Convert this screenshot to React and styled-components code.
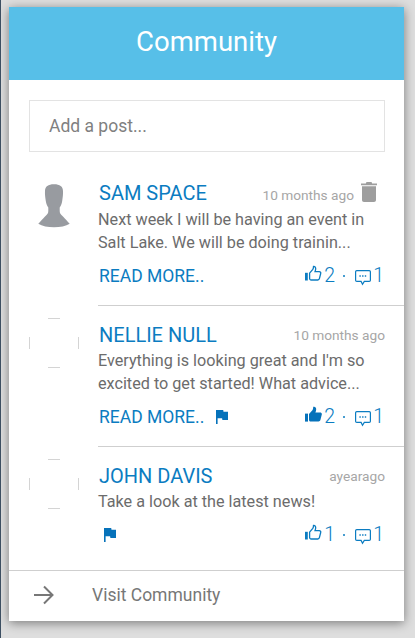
import React from "react";
import styled, { createGlobalStyle } from "styled-components";

const Global = createGlobalStyle`
  html, body { margin: 0; padding: 0; height: 100%; background: #dedede; overflow: hidden; }
  * { box-sizing: border-box; }
  #root { height: 100%; }
`;

const Page = styled.div`
  width: 415px;
  height: 638px;
  padding: 7px 11px 17px 9px;
  font-family: Roboto, sans-serif;
  position: relative;
  &::before {
    content: "";
    position: absolute;
    left: 0; top: 0; bottom: 0;
    width: 1px;
    background: #3d4f62;
  }
`;

const Card = styled.section`
  width: 395px;
  height: 614px;
  background: #fff;
  box-shadow: 0 2px 10px rgba(0, 0, 0, 0.45);
  display: flex;
  flex-direction: column;
`;

const Header = styled.header`
  height: 73px;
  flex: none;
  background: #57bfe8;
  color: #fff;
  font-size: 27.5px;
  line-height: 69px;
  text-align: center;
`;

const AddPost = styled.div`
  flex: none;
  height: 52px;
  margin: 20px 19px 18px 20px;
  padding-left: 19px;
  border: 1px solid #e3e3e3;
  color: #808080;
  font-size: 17.5px;
  line-height: 50px;
`;

const Post = styled.article`
  flex: none;
  display: flex;
  height: ${(p) => p.$h}px;
  padding-left: 20px;
`;

const AvatarSlot = styled.div`
  flex: none;
  width: 50px;
  height: 50px;
  margin-top: ${(p) => p.$top}px;
  margin-right: 19px;
`;

const Main = styled.div`
  flex: 1;
  min-width: 0;
  display: flex;
  flex-direction: column;
  padding-right: 19px;
  border-bottom: ${(p) => (p.$last ? "0" : "1px solid #cfcfcf")};
`;

const TopRow = styled.div`
  display: flex;
  align-items: center;
  height: 26px;
  margin-top: ${(p) => p.$top}px;
`;

const Name = styled.a`
  flex: 1;
  padding-left: 1px;
  color: #0b7cc1;
  font-size: 20px;
  line-height: 26px;
`;

const When = styled.span`
  color: #a6a6a6;
  font-size: 13.7px;
  line-height: 26px;
  margin-top: ${(p) => p.$drop}px;
`;

const Trash = styled.svg`
  flex: none;
  width: 16px;
  height: 20px;
  margin: -2px 8px 0 7px;
  fill: #9e9e9e;
`;

const Text = styled.p`
  margin: ${(p) => p.$gap}px 0 0;
  color: #6c6c6c;
  font-size: 16.2px;
  line-height: 23px;
`;

const Actions = styled.div`
  display: flex;
  align-items: center;
  height: 26px;
  margin-top: 9px;
  color: #0b7cc1;
`;

const ReadMore = styled.a`
  font-size: 17.5px;
  line-height: 26px;
  padding-left: 1px;
`;

const Flag = styled.svg`
  flex: none;
  width: 12px;
  height: 14px;
  margin-left: ${(p) => p.$left}px;
  fill: #0672ba;
`;

const Stats = styled.div`
  margin-left: auto;
  display: flex;
  align-items: center;
  font-size: 19.5px;
  font-weight: 300;
  margin-right: 1px;
`;

const Count = styled.span`
  margin-left: 2px;
  line-height: 26px;
`;

const Dot = styled.span`
  width: 2px;
  height: 2px;
  margin: 0 10px 0 8px;
  background: #0b7cc1;
  border-radius: 50%;
`;

const ThumbBox = styled.svg`
  flex: none;
  width: 17px;
  height: 18px;
  margin-bottom: 5px;
`;

const CommentBox = styled.svg`
  flex: none;
  width: 16px;
  height: 18px;
  margin-top: 1px;
`;

const Footer = styled.footer`
  flex: none;
  height: 51px;
  display: flex;
  align-items: center;
  border-top: 1px solid #cfcfcf;
  padding-left: 25px;
  padding-bottom: 2px;
  color: #777;
  font-size: 17.5px;
`;

const Arrow = styled.svg`
  flex: none;
  width: 20px;
  height: 20px;
  margin-right: 38px;
`;

const Silhouette = () => (
  <svg width="50" height="50" viewBox="0 0 50 50">
    <path
      fill="#989ba0"
      d="M25 2.300C19 2.300 16.200 4.500 16 9c-.2 3 .3 7 .8 10 .4 3 1.400 5 2.500 6.500V29c0 2-.8 3.500-3.300 5.500-2 2-4.500 5-6.700 7.200C13 44 19 45.300 25 45.300s12-1.300 15.700-3.600c-2.200-2.200-4.700-5.200-6.700-7.200-2.500-2-3.300-3.500-3.300-5.500v-3.500c1.100-1.500 2.100-3.500 2.500-6.500.5-3 1-7 .8-10C33.800 4.500 31 2.300 25 2.300z"
    />
  </svg>
);

const BrokenAvatar = () => (
  <svg width="50" height="50" viewBox="0 0 50 50" fill="none" stroke="#d4d4d4" strokeWidth="1">
    <path d="M19 .5h12M19 49.500h12M.5 19v12M49.500 19v12" />
  </svg>
);

const FlagIcon = ({ left }) => (
  <Flag $left={left} viewBox="5 4 15 17" preserveAspectRatio="none">
    <path d="M14.400 6 14 4H5v17h2v-7h5.600l.4 2h7V6z" />
  </Flag>
);

const ThumbOutline = () => (
  <ThumbBox viewBox="0 0 17 18" fill="none" stroke="#0b7cc1" strokeWidth="1.300">
    <path d="M4.600 8.200 7.800 4.400c.5-.7.700-1.600.7-2.900 1.300-.3 2.200.8 2.200 2.200 0 1-.4 2-.7 3h4.300c1 0 1.700.8 1.400 1.800l-1.300 5.200c-.2.800-.8 1.300-1.600 1.300H6.200c-.9 0-1.600-.6-1.600-1.500z" />
    <path fill="#0b7cc1" stroke="none" d="M0 7.800h2.800v7.700H0z" />
  </ThumbBox>
);

const ThumbSolid = () => (
  <ThumbBox viewBox="0 0 17 18" fill="#0672ba">
    <path d="M4 8 7.400 4.200c.6-.8.800-1.800.8-3.400C10 .2 11.200 1.400 11.200 3.200c0 1.100-.4 2.200-.8 3.200h4.700c1.200 0 2 .9 1.700 2l-1.400 5.700c-.2.900-1 1.400-1.800 1.400H5.600C4.700 15.500 4 14.800 4 14z" />
    <path d="M0 7.600h3v8H0z" />
  </ThumbBox>
);

const Comment = () => (
  <CommentBox viewBox="0 0 16 18" fill="none" stroke="#0b7cc1" strokeWidth="1.200">
    <path d="M1.800 2.600h12.400c.7 0 1.200.5 1.200 1.200v8.400c0 .7-.5 1.200-1.200 1.200H9.300l-1.800 2.800-1.400-2.800H1.800c-.7 0-1.200-.5-1.200-1.200V3.800c0-.7.500-1.200 1.200-1.200z" />
    <path strokeWidth="1.400" strokeDasharray="1.400 1.300" d="M4.400 8h7.400" />
  </CommentBox>
);

const posts = [
  {
    h: 136, top: 10, gap: 2, drop: 4, avatarTop: 12, name: "SAM SPACE", when: "10 months ago", trash: true,
    lines: ["Next week I will be having an event in", "Salt Lake. We will be doing trainin..."],
    more: true, likes: 2,
  },
  {
    h: 141, top: 16, gap: 1, drop: 0, avatarTop: 12, name: "NELLIE NULL", when: "10 months ago", solid: true, flag: 12,
    lines: ["Everything is looking great and I'm so", "excited to get started! What advice..."],
    more: true, likes: 2,
  },
  {
    h: 123, top: 16, gap: 1, drop: 0, avatarTop: 12, name: "JOHN DAVIS", when: "ayearago", flag: 6, last: true,
    lines: ["Take a look at the latest news!"],
    likes: 1,
  },
];

export default function App() {
  return (
    <Page>
      <Global />
      <Card>
        <Header>Community</Header>
        <AddPost>Add a post...</AddPost>
        {posts.map((p) => (
          <Post key={p.name} $h={p.h}>
            <AvatarSlot $top={p.avatarTop}>{p.trash ? <Silhouette /> : <BrokenAvatar />}</AvatarSlot>
            <Main $last={p.last}>
              <TopRow $top={p.top}>
                <Name>{p.name}</Name>
                <When $drop={p.drop}>{p.when}</When>
                {p.trash && (
                  <Trash viewBox="0 0 16 20">
                    <path d="M5.500 0h5l.7 1.500H16v1.700H0V1.500h4.800zM1 4.200h14V18c0 1-.8 2-2 2H3c-1.200 0-2-1-2-2z" />
                  </Trash>
                )}
              </TopRow>
              <Text $gap={p.gap}>
                {p.lines.map((l) => (
                  <React.Fragment key={l}>
                    {l}
                    <br />
                  </React.Fragment>
                ))}
              </Text>
              <Actions>
                {p.more && <ReadMore>READ MORE..</ReadMore>}
                {p.flag && <FlagIcon left={p.flag} />}
                <Stats>
                  {p.solid ? <ThumbSolid /> : <ThumbOutline />}
                  <Count>{p.likes}</Count>
                  <Dot />
                  <Comment />
                  <Count>1</Count>
                </Stats>
              </Actions>
            </Main>
          </Post>
        ))}
        <Footer>
          <Arrow viewBox="0 0 20 20" fill="none" stroke="#777" strokeWidth="2">
            <path d="M0 10h18M10 1.500 18.500 10 10 18.500" />
          </Arrow>
          Visit Community
        </Footer>
      </Card>
    </Page>
  );
}
